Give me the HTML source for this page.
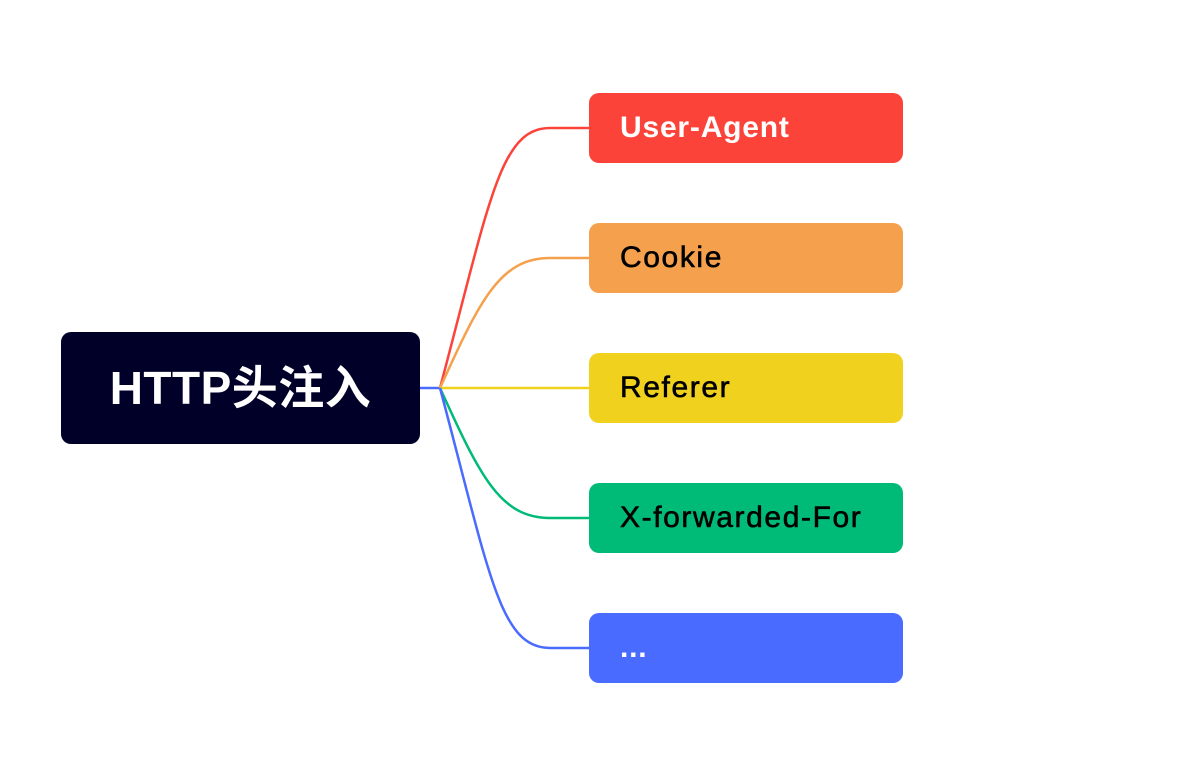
<!DOCTYPE html>
<html><head><meta charset="utf-8"><style>
html,body{margin:0;padding:0;background:#fff;}
body{width:1180px;height:775px;position:relative;overflow:hidden;font-family:"Liberation Sans","Noto Sans CJK SC",sans-serif;}
.root{position:absolute;left:61px;top:332px;width:359px;height:112px;background:#000028;border-radius:10px;color:#fff;font-weight:bold;font-size:46px;line-height:112px;text-align:center;letter-spacing:0.5px;}
.n{position:absolute;left:589px;width:314px;height:70px;border-radius:10px;font-size:30px;line-height:70px;padding-left:31px;box-sizing:border-box;letter-spacing:1.6px;-webkit-text-stroke:0.6px currentColor;}
.w{font-weight:bold;letter-spacing:0.8px;-webkit-text-stroke:0;}
svg{position:absolute;left:0;top:0;}
</style></head><body>
<svg width="1180" height="775" fill="none" stroke-width="2.5">
<path d="M420 388 L440 388" stroke="#4A6BFF"/>
<path d="M440 388 C490 200 500 128 550 128 L590 128" stroke="#FC433A"/>
<path d="M440 388 C480 300 500 258 550 258 L590 258" stroke="#F5A04C"/>
<path d="M440 388 L590 388" stroke="#F0D21E"/>
<path d="M440 388 C480 476 500 518 550 518 L590 518" stroke="#00BB77"/>
<path d="M440 388 C490 576 500 648 550 648 L590 648" stroke="#4A6BFF"/>
</svg>
<div class="root">HTTP头注入</div>
<div class="n w" style="top:93px;background:#FC433A;color:#fff;">User-Agent</div>
<div class="n" style="top:223px;background:#F5A04C;color:#000;">Cookie</div>
<div class="n" style="top:353px;background:#F0D21E;color:#000;">Referer</div>
<div class="n" style="top:483px;background:#00BB77;color:#000;">X-forwarded-For</div>
<div class="n w" style="top:613px;background:#4A6BFF;color:#fff;">...</div>
</body></html>
